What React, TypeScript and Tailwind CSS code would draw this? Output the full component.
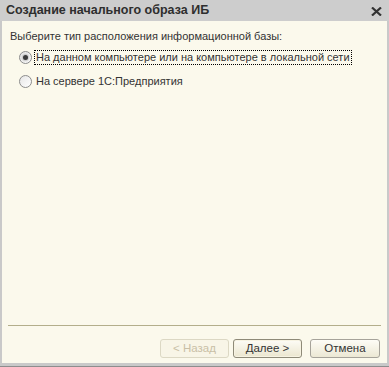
import React from 'react';

const font = { fontFamily: '"Liberation Sans", Arial, sans-serif' };

const Radio: React.FC<{ checked?: boolean }> = ({ checked }) => (
  <div className="w-[13px] h-[13px] rounded-full border border-[#8c8c8c] bg-gradient-to-br from-[#e6e6e6] to-white flex items-center justify-center shrink-0">
    {checked && <div className="w-[5px] h-[5px] rounded-full bg-[#3a3a3a] shadow-[0_0_2px_1px_rgba(90,90,90,0.35)]" />}
  </div>
);

const Btn: React.FC<{ label: string; disabled?: boolean; primary?: boolean; w: string }> = ({ label, disabled, primary, w }) => (
  <button
    className={`${w} h-[19px] rounded-[3px] text-[11.5px] leading-none flex items-center justify-center border
      ${disabled ? 'border-[#dcd8c4] text-[#c9bfa6] bg-[#f8f5e7]' : primary ? 'border-[#8e8a78] text-[#333] bg-gradient-to-b from-[#fdfcf6] to-[#ebe6cf] shadow-[inset_0_0_0_1px_#f7f3e2]' : 'border-[#a6a39a] text-[#333] bg-gradient-to-b from-[#fdfcf6] to-[#ece8d4]'}`}
  >
    {label}
  </button>
);

export default function App() {
  return (
    <div className="w-[389px] h-[367px] flex flex-col bg-[#c9c9c9] select-none" style={font}>
      {/* Title bar */}
      <div className="h-[21px] shrink-0 flex items-center justify-between pl-[6px] pr-[7px] bg-[#cdcdcd]">
        <span className="text-[12.5px] font-bold text-[#2e2e2e] leading-none">Создание начального образа ИБ</span>
        <svg width="11" height="9" viewBox="0 0 11 9" className="mt-[1px]">
          <path d="M1 0.5 L10 8.5 M10 0.5 L1 8.5" stroke="#333" strokeWidth="2.2" />
        </svg>
      </div>

      {/* Body */}
      <div className="flex-1 flex flex-col mx-[2px] bg-[#fbf9ec] pt-[8px] px-[6px]">
        <div className="text-[11px] leading-[14px] text-[#333] pl-[2px]">
          Выберите тип расположения информационной базы:
        </div>
        <div className="mt-[7px] flex flex-col gap-[10px] pl-[11px]">
          <div className="flex items-center gap-[2px] h-[14px]">
            <Radio checked />
            <span className="text-[11px] leading-[13px] text-[#333] border border-dotted border-black px-[1px]">
              На данном компьютере или на компьютере в локальной сети
            </span>
          </div>
          <div className="flex items-center gap-[3px] h-[14px]">
            <Radio />
            <span className="text-[11px] leading-[13px] text-[#333] px-[1px]">На сервере 1С:Предприятия</span>
          </div>
        </div>

        <div className="flex-1" />
        <div className="h-px bg-[#b3ae8b] mb-[13px]" />
        <div className="flex justify-end pr-[1px] mb-[5px]">
          <Btn label="< Назад" disabled w="w-[69px]" />
          <div className="w-[4px]" />
          <Btn label="Далее >" primary w="w-[69px]" />
          <div className="w-[8px]" />
          <Btn label="Отмена" w="w-[70px]" />
        </div>
      </div>
      <div className="h-[3px] bg-[#c9c9c9]" />
      <div className="h-px bg-[#8d8d8d]" />
    </div>
  );
}
